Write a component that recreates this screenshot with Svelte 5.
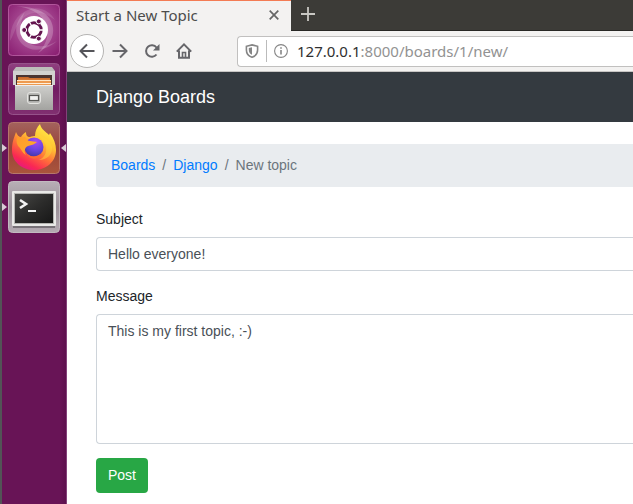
<script>
  let subject = $state('Hello everyone!');
  let message = $state('This is my first topic, :-)');
  let address = $state('127.0.0.1:8000/boards/1/new/');
  let host = $derived(address.split(':')[0]);
  let rest = $derived(address.slice(host.length));
</script>

<div class="desktop">
  <nav class="launcher" aria-label="Launcher">
    <button class="tile dash" aria-label="Search your computer">
      <svg viewBox="0 0 52 52">
        <defs>
          <radialGradient id="dashGlow" cx=".5" cy=".45" r=".65">
            <stop offset="0" stop-color="#c98abb" />
            <stop offset=".55" stop-color="#a2438d" />
            <stop offset="1" stop-color="#8d2375" />
          </radialGradient>
        </defs>
        <rect width="52" height="52" rx="4" fill="url(#dashGlow)" />
        <path d="M8 2C22 3 37 5 43 17C49 30 42 42 30 49C40 39 42 27 37 18C31 7 20 4 8 2Z" fill="#fff" opacity=".22" />
        <path d="M49 37C38 47 23 49 14 40C5 30 7 17 17 8C11 19 11 30 18 37C26 44 38 44 49 37Z" fill="#fff" opacity=".18" />
        <path d="M2 37C2 22 8 10 22 5C33 2 43 8 47 16C38 9 27 6 18 12C8 18 7 29 2 37Z" fill="#fff" opacity=".12" />
        <rect x=".5" y=".5" width="51" height="51" rx="4" fill="none" stroke="#bd68a8" stroke-opacity=".7" />
        <circle cx="26" cy="26" r="14" fill="#fff" />
        <circle cx="26" cy="26" r="7.2" fill="none" stroke="#64154f" stroke-width="3" />
        <path d="M26 26H37M26 26L20.5 16.5M26 26L20.5 35.5" stroke="#fff" stroke-width="1.4" />
        <circle cx="26" cy="26" r="5.6" fill="#fff" />
        <g fill="#64154f" stroke="#fff" stroke-width="1">
          <circle cx="16.2" cy="26" r="2.5" />
          <circle cx="30.8" cy="17.4" r="2.5" />
          <circle cx="30.8" cy="34.6" r="2.5" />
        </g>
      </svg>
    </button>

    <button class="tile files" aria-label="Files">
      <svg viewBox="0 0 52 52">
        <defs>
          <linearGradient id="filesBg" x2="0" y2="1">
            <stop offset="0" stop-color="#904080" />
            <stop offset=".5" stop-color="#721c62" />
            <stop offset="1" stop-color="#813071" />
          </linearGradient>
          <linearGradient id="cabinet" x2="0" y2="1">
            <stop offset="0" stop-color="#d0d0cd" />
            <stop offset="1" stop-color="#a3a3a0" />
          </linearGradient>
          <linearGradient id="paper" x2="0" y2="1">
            <stop offset="0" stop-color="#c76525" />
            <stop offset="1" stop-color="#f3a55b" />
          </linearGradient>
        </defs>
        <rect x=".5" y=".5" width="51" height="51" rx="4" fill="url(#filesBg)" stroke="#96528a" />
        <path d="M5 8L8 4H44L47 8V22H5Z" fill="#bdbdba" />
        <path d="M5 8H47V22H5Z" fill="#d2d2cf" />
        <path d="M8 12H44V23H8Z" fill="#4a3430" />
        <path d="M10 14H20L22 15H42V22H10Z" fill="url(#paper)" />
        <path d="M9 17H43V18H9Z" fill="#ffe6c6" />
        <path d="M9 18H43V22H9Z" fill="#ed9a50" />
        <path d="M9 20H43V21H9Z" fill="#fff0dc" />
        <path d="M7 22H45V47H7Z" fill="url(#cabinet)" />
        <path d="M7 22.5H45" stroke="#eee" />
        <rect x="19.5" y="29.5" width="13" height="11" rx="2.5" fill="#b9b9b6" stroke="#e4e4e1" />
        <rect x="21.5" y="32.5" width="9" height="5" fill="#f2f2f0" stroke="#555552" stroke-width="1.2" />
      </svg>
    </button>

    <button class="tile running focused" aria-label="Firefox">
      <svg viewBox="0 0 52 52">
        <defs>
          <linearGradient id="foxBg" x2="0" y2="1">
            <stop offset="0" stop-color="#a3625d" />
            <stop offset=".5" stop-color="#984338" />
            <stop offset="1" stop-color="#aa553c" />
          </linearGradient>
          <linearGradient id="foxBody" x1=".8" y1="0" x2=".25" y2="1">
            <stop offset="0" stop-color="#fff24c" />
            <stop offset=".35" stop-color="#ffc432" />
            <stop offset=".6" stop-color="#ff7139" />
            <stop offset=".84" stop-color="#fa2853" />
            <stop offset="1" stop-color="#e51585" />
          </linearGradient>
          <radialGradient id="foxGlobe" cx=".6" cy=".2" r=".9">
            <stop offset="0" stop-color="#a64af5" />
            <stop offset=".55" stop-color="#6644df" />
            <stop offset="1" stop-color="#3d3598" />
          </radialGradient>
          <linearGradient id="foxHead" x2="1" y2="1">
            <stop offset="0" stop-color="#ff9a2b" />
            <stop offset="1" stop-color="#ffad2c" />
          </linearGradient>
        </defs>
        <rect x=".5" y=".5" width="51" height="51" rx="4" fill="url(#foxBg)" stroke="#b6776b" />
        <path d="M8 10C9 13 11 15 13 15C14 13 16 11 18 10C18 13 19 15 22 15C24 14 26 14 27 14C27 9 29 5 32 2C33 7 38 10 41 13L42 11C46 17 48 22 48 28C48 40 38 48 26 48C14 48 4 40 4 28C4 20 6 16 8 10Z" fill="url(#foxBody)" />
        <circle cx="26" cy="25" r="9.5" fill="url(#foxGlobe)" />
        <path d="M10 14C12 16 15 16 17 15C18 17 20 19 22 19L29 20C27 22 24 23 20 24C16 26 16 30 18 33C14 31 13 26 10 24C8 20 8 17 10 14Z" fill="url(#foxHead)" />
        <path d="M18 31C22 36 29 35 34 31C31 38 22 39 18 31Z" fill="#ff6a34" />
        <path d="M28 11C31 17 37 18 38 25C39 31 36 36 31 38C39 38 45 32 44 25C43 18 34 14 28 11Z" fill="#ffd53a" opacity=".5" />
      </svg>
    </button>

    <button class="tile running" aria-label="Terminal">
      <svg viewBox="0 0 52 52">
        <defs>
          <linearGradient id="termBg" x2="0" y2="1">
            <stop offset="0" stop-color="#b8afb6" />
            <stop offset=".5" stop-color="#9b9199" />
            <stop offset="1" stop-color="#b5abb3" />
          </linearGradient>
          <linearGradient id="screen" x2="1" y2="1">
            <stop offset="0" stop-color="#484846" />
            <stop offset=".5" stop-color="#2c2c2b" />
            <stop offset="1" stop-color="#171717" />
          </linearGradient>
        </defs>
        <rect x=".5" y=".5" width="51" height="51" rx="4" fill="url(#termBg)" stroke="#c2bac0" />
        <path d="M5 46H47" stroke="#777177" stroke-width="2" />
        <rect x="4" y="10" width="44" height="35" rx="1" fill="#e9e9e7" />
        <rect x="6" y="12" width="40" height="31" fill="#b5b5b2" />
        <rect x="7" y="13" width="38" height="29" fill="url(#screen)" />
        <path d="M12 19L18 23L12 27" fill="none" stroke="#f3f3f3" stroke-width="2.6" />
        <path d="M20 30H28" stroke="#f3f3f3" stroke-width="2" />
      </svg>
    </button>
  </nav>

  <div class="browser">
    <header class="tabs">
      <div class="tab">
        <span>Start a New Topic</span>
        <button aria-label="Close tab">
          <svg width="10" height="10" viewBox="0 0 10 10"><path d="M.7.7L9.3 9.3M9.3.7L.7 9.3" stroke="#666" stroke-width="1.7" /></svg>
        </button>
      </div>
      <button class="add" aria-label="New tab">
        <svg width="14" height="14" viewBox="0 0 14 14"><path d="M7 0V14M0 7H14" stroke="#c9c8c3" stroke-width="1.8" /></svg>
      </button>
    </header>

    <div class="toolbar">
      <button class="back" aria-label="Back">
        <svg width="16" height="16" viewBox="0 0 16 16"><path d="M8 1.5L1.5 8L8 14.5M1.5 8H15.5" /></svg>
      </button>
      <button aria-label="Forward">
        <svg width="16" height="16" viewBox="0 0 16 16"><path d="M8 1.5L14.5 8L8 14.5M14.5 8H.5" /></svg>
      </button>
      <button aria-label="Reload">
        <svg width="16" height="16" viewBox="0 0 16 16"><path d="M12.5 11.5A5.8 5.8 0 1 1 12.5 4.5L14 6" /><path d="M15.5 1V7.5H9Z" fill="#66666a" stroke="none" /></svg>
      </button>
      <button aria-label="Home">
        <svg width="16" height="16" viewBox="0 0 16 16"><path d="M.8 8.6L8 1.4L15.2 8.6M3 7.5V14.8H13V7.5" /><path d="M6.5 14.5V9.5H9.5V14.5" stroke-width="1.6" /></svg>
      </button>
      <div class="address">
        <svg width="14" height="14" viewBox="0 0 14 14"><path d="M7 .9L12.6 2.3V6C12.6 9.8 10 12.3 7 13.2C4 12.3 1.4 9.8 1.4 6V2.3Z" fill="none" stroke="#858585" stroke-width="1.6" /><path d="M7 3.3V10.8C5 9.9 3.8 8.3 3.8 6V4Z" fill="#858585" /></svg>
        <span class="divider"></span>
        <svg width="14" height="14" viewBox="0 0 14 14"><circle cx="7" cy="7" r="6.4" fill="none" stroke="#858585" stroke-width="1.1" /><path d="M7 6V10.5M7 3.2V4.8" stroke="#858585" stroke-width="1.6" /></svg>
        <label class="url">
          <span class="shown" aria-hidden="true"><b>{host}</b>{rest}</span>
          <input aria-label="Address" bind:value={address} spellcheck="false" />
        </label>
      </div>
    </div>

    <div class="navbar"><a href="#boards">Django Boards</a></div>

    <main>
      <nav aria-label="Breadcrumb">
        <ol class="breadcrumb">
          <li><a href="#boards">Boards</a></li>
          <li><a href="#django">Django</a></li>
          <li aria-current="page">New topic</li>
        </ol>
      </nav>
      <form onsubmit={(e) => e.preventDefault()}>
        <div class="group">
          <label for="subject">Subject</label>
          <input id="subject" bind:value={subject} />
        </div>
        <div class="group">
          <label for="message">Message</label>
          <textarea id="message" bind:value={message} spellcheck="false"></textarea>
        </div>
        <button class="post" type="submit">Post</button>
      </form>
    </main>
  </div>
</div>

<style>
  .desktop {
    display: flex;
    min-height: 100vh;
    overflow: hidden;
    background: #fff;
    font: 14px/21px "Liberation Sans", Arial, sans-serif;
    color: #212529;
  }
  .desktop * { box-sizing: border-box; }
  button, input, textarea { font: inherit; }
  button { padding: 0; border: 0; background: none; cursor: pointer; }
  svg { display: block; flex: none; }

  .launcher {
    display: flex;
    flex: none;
    flex-direction: column;
    gap: 7px;
    width: 67px;
    padding: 4px 6px;
    border-left: 2px solid #525456;
    border-right: 1px solid #84417a;
    background: linear-gradient(90deg, #681456, #681456 90%, #5d104d);
  }
  .tile { position: relative; width: 52px; height: 52px; }
  .tile svg { width: 52px; height: 52px; }
  .running::before, .focused::after {
    content: "";
    position: absolute;
    top: 22px;
    border: solid transparent;
    border-width: 4px 0;
  }
  .running::before { left: -6px; border-left: 5px solid #d9cbd6; }
  .focused::after { right: -6px; border-right: 5px solid #d9cbd6; }

  .browser { flex: 1; min-width: 0; }
  .tabs { display: flex; height: 31px; background: #3c3b37; border-bottom: 1px solid #282825; }
  .tab {
    display: flex;
    align-items: center;
    justify-content: space-between;
    width: 224px;
    height: 31px;
    padding: 0 12px 2px 9px;
    border-top: 1px solid #f37b54;
    background: #f3f2f1;
    color: #4c4c4c;
    font: 15px/22px "Noto Sans", sans-serif;
  }
  .add { display: grid; place-items: center; width: 34px; height: 28px; }
  .toolbar {
    display: flex;
    align-items: center;
    height: 41px;
    padding-left: 3px;
    border-bottom: 1px solid #c7c5c4;
    background: #f3f2f1;
  }
  .toolbar button { display: grid; flex: none; place-items: center; width: 32px; height: 34px; }
  .toolbar button svg { fill: none; stroke: #66666a; stroke-width: 2; }
  .toolbar .back { width: 34px; border: 1px solid #b5b4b3; border-radius: 50%; background: #fff; }
  .toolbar .back svg { stroke: #55555a; }
  .address {
    display: flex;
    flex: 1;
    align-items: center;
    min-width: 0;
    height: 31px;
    margin-left: 37px;
    padding-left: 7px;
    border: 1px solid #c1c0bf;
    border-right: 0;
    border-radius: 4px 0 0 4px;
    background: #fff;
  }
  .divider { width: 1px; height: 22px; margin: 0 7px; background: #bbb; }
  .url { position: relative; flex: 1; min-width: 0; margin-left: 9px; font: 15px/22px "Noto Sans", sans-serif; }
  .shown { display: block; color: #929292; white-space: nowrap; }
  .shown b { color: #303030; font-weight: 400; }
  .url input {
    position: absolute;
    inset: 0;
    width: 100%;
    padding: 0;
    border: 0;
    outline: 0;
    background: none;
    color: transparent;
    caret-color: #303030;
  }

  .navbar { display: flex; align-items: center; height: 50px; padding-left: 29px; background: #343a40; }
  .navbar a { color: #fff; font-size: 18px; line-height: 27px; text-decoration: none; }
  main { padding: 22px 0 11px 29px; }
  .breadcrumb {
    display: flex;
    margin: 0 0 22px;
    padding: 11px 15px;
    border-radius: 4px 0 0 4px;
    background: #e9ecef;
    color: #6c757d;
    list-style: none;
  }
  .breadcrumb a { color: #007bff; text-decoration: none; }
  .breadcrumb li + li::before { content: "/"; padding: 0 7px; }
  .group { margin-bottom: 15px; }
  .group + .group { margin-bottom: 14px; }
  .group label { display: block; margin-bottom: 7px; }
  .group input, .group textarea {
    display: block;
    width: 100%;
    height: 34px;
    padding: 5px 11px;
    border: 1px solid #ced4da;
    border-right: 0;
    border-radius: 4px 0 0 4px;
    background: #fff;
    color: #495057;
  }
  .group textarea { height: 130px; padding-top: 6px; resize: none; }
  .post { height: 35px; padding: 0 12px; border-radius: 4px; background: #28a745; color: #fff; }
</style>
